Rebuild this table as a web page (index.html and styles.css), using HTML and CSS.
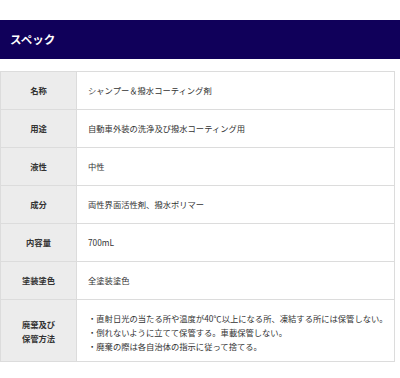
FILE: index.html
```html
<!DOCTYPE html>
<html lang="ja">
<head>
<meta charset="utf-8">
<link rel="stylesheet" href="styles.css">
</head>
<body>
<div class="page">
  <h2 class="title">スペック</h2>
  <table class="spec">
    <tr><th>名称</th><td>シャンプー＆撥水コーティング剤</td></tr>
    <tr><th>用途</th><td>自動車外装の洗浄及び撥水コーティング用</td></tr>
    <tr><th>液性</th><td>中性</td></tr>
    <tr><th>成分</th><td>両性界面活性剤、撥水ポリマー</td></tr>
    <tr><th>内容量</th><td>700mL</td></tr>
    <tr><th>塗装塗色</th><td>全塗装塗色</td></tr>
    <tr class="multi"><th>廃棄及び<br>保管方法</th><td>・直射日光の当たる所や温度が40℃以上になる所、凍結する所には保管しない。<br>・倒れないように立てて保管する。車載保管しない。<br>・廃棄の際は各自治体の指示に従って捨てる。</td></tr>
  </table>
</div>
</body>
</html>
```

FILE: styles.css
```css
html, body {
  margin: 0;
  padding: 0;
  background: #fff;
}
.page {
  padding-top: 20px;
  width: 400px;
  font-family: "Noto Sans CJK JP", "Noto Sans", sans-serif;
  color: #333;
}
.title {
  margin: 0;
  height: 39px;
  background: #10005a;
  color: #fff;
  font-size: 11.5px;
  font-weight: bold;
  line-height: 39px;
  padding-left: 10px;
}
.spec {
  margin-top: 12px;
  width: 395px;
  border-collapse: collapse;
  font-size: 8.3px;
}
.spec th,
.spec td {
  border: 1px solid #dcdcdc;
  height: 38px;
  padding: 0;
  line-height: 13px;
  vertical-align: middle;
  box-sizing: border-box;
}
.spec th {
  width: 76px;
  background: #ececec;
  font-weight: bold;
  text-align: center;
  color: #333;
}
.spec td {
  text-align: left;
  padding-left: 11px;
  font-weight: normal;
}
.spec .multi th,
.spec .multi td {
  height: 62px;
  line-height: 14px;
}
.spec .multi td {
  padding-top: 3px;
}
```
